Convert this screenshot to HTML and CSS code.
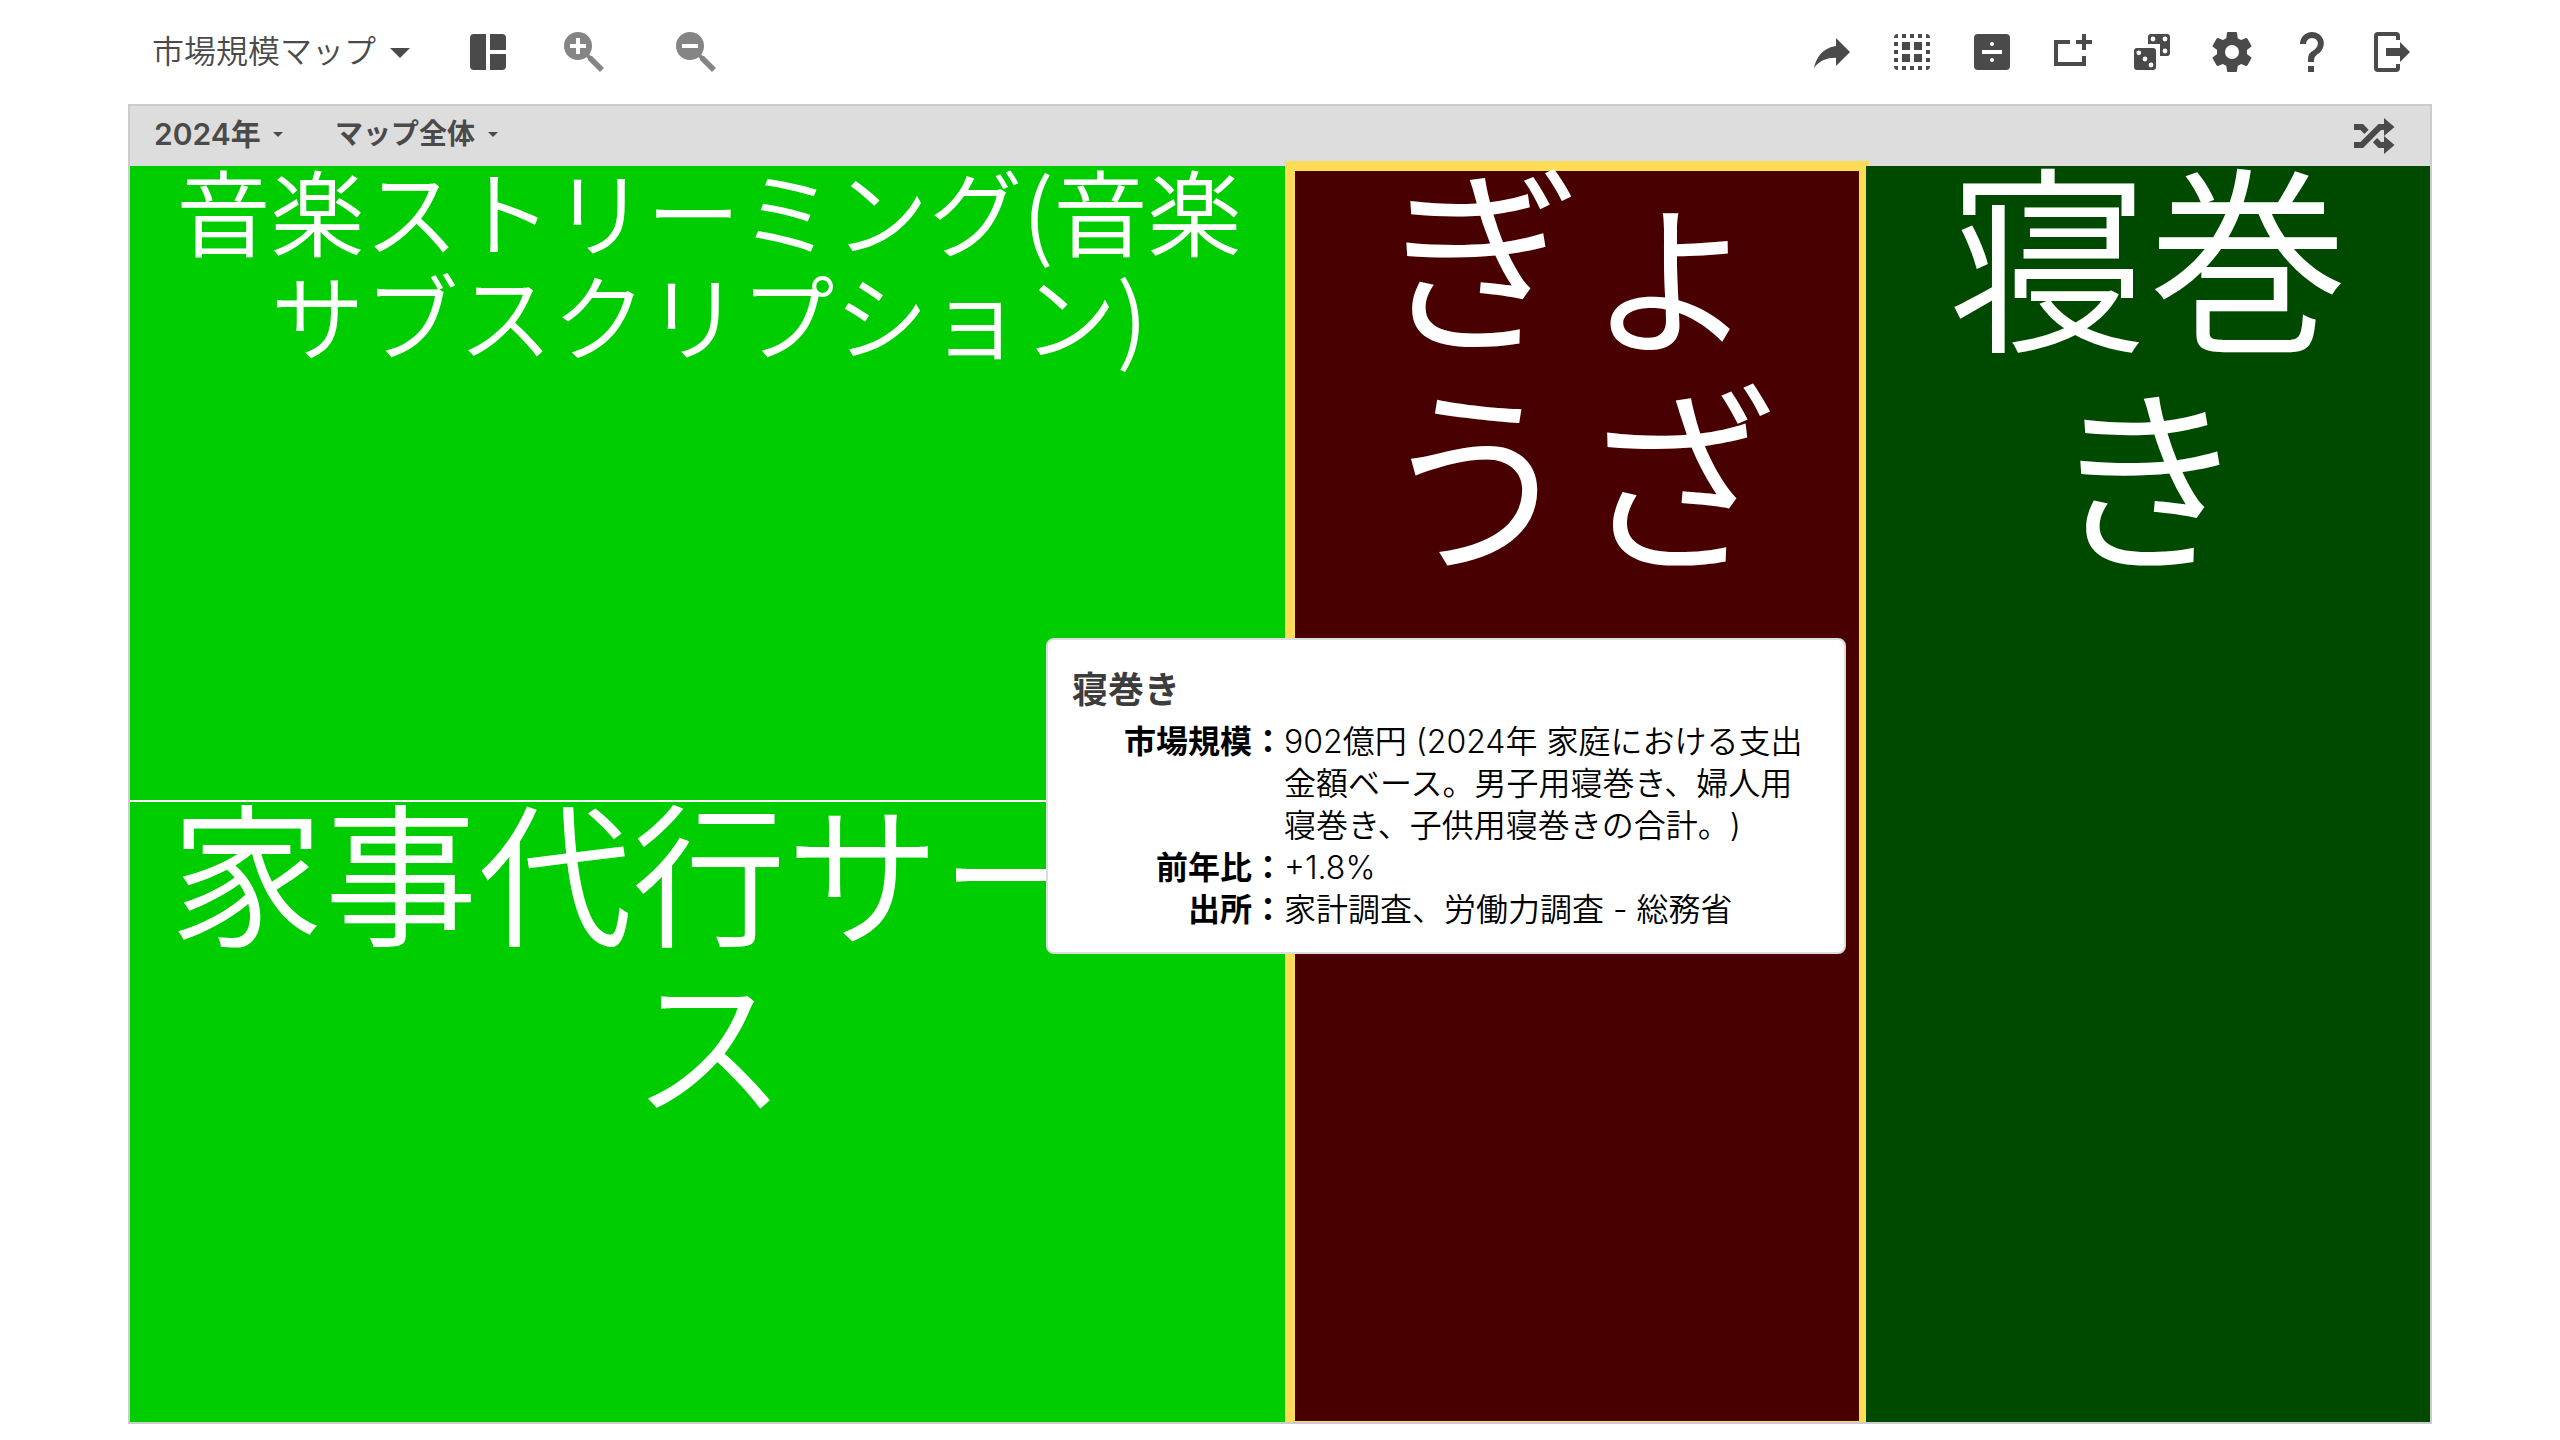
FILE: index.html
```html
<!DOCTYPE html>
<html lang="ja">
<head>
<meta charset="utf-8">
<meta name="viewport" content="width=device-width, initial-scale=1">
<title>市場規模マップ</title>
<link rel="stylesheet" href="styles.css">
</head>
<body>
<header class="toolbar">
  <button type="button" class="map-menu" aria-haspopup="menu">市場規模マップ<svg class="icon" viewBox="0 0 24 24"><path d="M7,10L12,15L17,10H7Z"/></svg></button>
  <div class="view-tools">
    <button type="button" class="icon-button" aria-label="レイアウト"><svg class="icon" viewBox="0 0 24 24"><path d="M11,21H5A2,2 0 0,1 3,19V5A2,2 0 0,1 5,3H11V21M13,21H19A2,2 0 0,0 21,19V13H13V21M21,11V5A2,2 0 0,0 19,3H13V11H21Z"/></svg></button>
    <button type="button" class="icon-button" aria-label="拡大" disabled><svg class="icon" viewBox="0 0 24 24"><path d="M9,2A7,7 0 0,1 16,9C16,10.57 15.5,12 14.61,13.19L15.41,14H16L22,20L20,22L14,16V15.41L13.19,14.61C12,15.5 10.57,16 9,16A7,7 0 0,1 2,9A7,7 0 0,1 9,2M8,5V8H5V10H8V13H10V10H13V8H10V5H8Z"/></svg></button>
    <button type="button" class="icon-button" aria-label="縮小" disabled><svg class="icon" viewBox="0 0 24 24"><path d="M9,2A7,7 0 0,1 16,9C16,10.57 15.5,12 14.61,13.19L15.41,14H16L22,20L20,22L14,16V15.41L13.19,14.61C12,15.5 10.57,16 9,16A7,7 0 0,1 2,9A7,7 0 0,1 9,2M5,8V10H13V8H5Z"/></svg></button>
  </div>
  <div class="page-tools">
    <button type="button" class="icon-button" aria-label="共有"><svg class="icon" viewBox="0 0 24 24"><path d="M21,12L14,5V9C7,10 4,15 3,20C5.5,16.5 9,14.9 14,14.9V19L21,12Z"/></svg></button>
    <button type="button" class="icon-button" aria-label="選択"><svg class="icon" viewBox="0 0 24 24"><path d="M3,5H5V3A2,2 0 0,0 3,5M7,3H9V5H7V3M11,3H13V5H11V3M15,3H17V5H15V3M19,3V5H21A2,2 0 0,0 19,3M3,7H5V9H3V7M3,11H5V13H3V11M3,15H5V17H3V15M19,7H21V9H19V7M19,11H21V13H19V11M19,15H21V17H19V15M3,19A2,2 0 0,0 5,21V19H3M7,19H9V21H7V19M11,19H13V21H11V19M15,19H17V21H15V19M19,21A2,2 0 0,0 21,19H19V21M7,7H11V11H7V7M13,7H17V11H13V7M7,13H11V17H7V13M13,13H17V17H13V13"/></svg></button>
    <button type="button" class="icon-button" aria-label="割り算"><svg class="icon" viewBox="0 0 24 24"><path d="M19,3H5A2,2 0 0,0 3,5V19A2,2 0 0,0 5,21H19A2,2 0 0,0 21,19V5A2,2 0 0,0 19,3M12,7A1,1 0 0,1 12,9A1,1 0 0,1 12,7M12,15A1,1 0 0,1 12,17A1,1 0 0,1 12,15M17,13H7V11H17V13Z"/></svg></button>
    <button type="button" class="icon-button" aria-label="追加"><svg class="icon" viewBox="0 0 24 24"><path d="M3,6H11V8H5V17H17V14H19V19H3V6M17,3H19V6H22V8H19V11H17V8H14V6H17V3Z"/></svg></button>
    <button type="button" class="icon-button" aria-label="ランダム"><svg class="icon" viewBox="0 0 24 24"><path fill-rule="evenodd" d="M4.5,10H12.5A1.5,1.5 0 0,1 14,11.5V19.5A1.5,1.5 0 0,1 12.5,21H4.5A1.5,1.5 0 0,1 3,19.5V11.5A1.5,1.5 0 0,1 4.5,10M5.4,11.2A1.2,1.2 0 0,0 5.4,13.6A1.2,1.2 0 0,0 5.4,11.2M8.5,14.3A1.2,1.2 0 0,0 8.5,16.7A1.2,1.2 0 0,0 8.5,14.3M11.5,17.3A1.2,1.2 0 0,0 11.5,19.7A1.2,1.2 0 0,0 11.5,17.3M11.5,3H19.5A1.5,1.5 0 0,1 21,4.5V12.5A1.5,1.5 0 0,1 19.5,14H16V8H10V4.5A1.5,1.5 0 0,1 11.5,3M12.5,4.3A1.2,1.2 0 0,0 12.5,6.7A1.2,1.2 0 0,0 12.5,4.3M18.5,4.3A1.2,1.2 0 0,0 18.5,6.7A1.2,1.2 0 0,0 18.5,4.3M18.5,10.3A1.2,1.2 0 0,0 18.5,12.7A1.2,1.2 0 0,0 18.5,10.3"/></svg></button>
    <button type="button" class="icon-button" aria-label="設定"><svg class="icon" viewBox="0 0 24 24"><path d="M12,15.5A3.5,3.5 0 0,1 8.5,12A3.5,3.5 0 0,1 12,8.5A3.5,3.5 0 0,1 15.5,12A3.5,3.5 0 0,1 12,15.5M19.43,12.97C19.47,12.65 19.5,12.33 19.5,12C19.5,11.67 19.47,11.34 19.43,11L21.54,9.37C21.73,9.22 21.78,8.95 21.66,8.73L19.66,5.27C19.54,5.05 19.27,4.96 19.05,5.05L16.56,6.05C16.04,5.66 15.5,5.32 14.87,5.07L14.5,2.42C14.46,2.18 14.25,2 14,2H10C9.75,2 9.54,2.18 9.5,2.42L9.13,5.07C8.5,5.32 7.96,5.66 7.44,6.05L4.95,5.05C4.73,4.96 4.46,5.05 4.34,5.27L2.34,8.73C2.21,8.95 2.27,9.22 2.46,9.37L4.57,11C4.53,11.34 4.5,11.67 4.5,12C4.5,12.33 4.53,12.65 4.57,12.97L2.46,14.63C2.27,14.78 2.21,15.05 2.34,15.27L4.34,18.73C4.46,18.95 4.73,19.03 4.95,18.95L7.44,17.94C7.96,18.34 8.5,18.68 9.13,18.93L9.5,21.58C9.54,21.82 9.75,22 10,22H14C14.25,22 14.46,21.82 14.5,21.58L14.87,18.93C15.5,18.67 16.04,18.34 16.56,17.94L19.05,18.95C19.27,19.03 19.54,18.95 19.66,18.73L21.66,15.27C21.78,15.05 21.73,14.78 21.54,14.63L19.43,12.97Z"/></svg></button>
    <button type="button" class="icon-button" aria-label="ヘルプ"><svg class="icon" viewBox="0 0 24 24"><path d="M10,19H13V22H10V19M12,2C17.35,2.22 19.68,7.62 16.5,11.67C15.67,12.67 14.33,13.33 13.67,14.17C13,15 13,16 13,17H10C10,15.33 10,13.92 10.67,12.92C11.33,11.92 12.67,11.33 13.5,10.67C15.92,8.43 15.32,5.26 12,5A3,3 0 0,0 9,8H6A6,6 0 0,1 12,2Z"/></svg></button>
    <button type="button" class="icon-button" aria-label="ログアウト"><svg class="icon" viewBox="0 0 24 24"><path d="M16,6H14V4H5V20H14V18H16V20A2,2 0 0,1 14,22H5A2,2 0 0,1 3,20V4A2,2 0 0,1 5,2H14A2,2 0 0,1 16,4V6M9,10H16V7L21,12L16,17V14H9V10Z"/></svg></button>
  </div>
</header>
<main class="frame">
  <div class="filter-bar">
    <label class="filter filter-year"><select aria-label="年"><option>2024年</option></select><svg class="caret" viewBox="0 0 10 5"><path d="M0,0H10L5,5Z"/></svg></label>
    <label class="filter"><select aria-label="表示範囲"><option>マップ全体</option></select><svg class="caret" viewBox="0 0 10 5"><path d="M0,0H10L5,5Z"/></svg></label>
    <button type="button" class="icon-button shuffle" aria-label="シャッフル"><svg class="icon" viewBox="0 0 24 24"><path d="M17,3L22.25,7.5L17,12L22.25,16.5L17,21V18H14.26L11.44,15.18L13.56,13.06L15.5,15H17V12V9H15.5L6.5,18H2V15H5.26L14.26,6H17V3M2,6H6.5L9.32,8.82L7.2,10.94L5.26,9H2V6Z"/></svg></button>
  </div>
  <div class="treemap">
    <div class="tile-stack">
      <div class="tile up-strong"><p class="tile-label size-s">音楽ストリーミング(音楽サブスクリプション)</p></div>
      <div class="tile up-strong"><p class="tile-label size-m">家事代行サービス</p></div>
    </div>
    <div class="tile down selected"><p class="tile-label size-l">ぎょうざ</p></div>
    <div class="tile up-weak"><p class="tile-label size-l">寝巻き</p></div>
    <section class="tooltip" role="tooltip">
      <h2 class="tooltip-title">寝巻き</h2>
      <dl class="facts">
        <dt>市場規模：</dt><dd>902億円 (2024年 家庭における支出金額ベース。男子用寝巻き、婦人用寝巻き、子供用寝巻きの合計。)</dd>
        <dt>前年比：</dt><dd>+1.8%</dd>
        <dt>出所：</dt><dd>家計調査、労働力調査 - 総務省</dd>
      </dl>
    </section>
  </div>
</main>
</body>
</html>
```
FILE: styles.css
```css
* {
  box-sizing: border-box;
}

body {
  margin: 0;
  padding: 0 5% 16px;
  min-height: 100vh;
  display: flex;
  flex-direction: column;
  background: #fff;
  color: #4a4a4a;
  font-family: Inter, "Noto Sans CJK JP", sans-serif;
  font-weight: 350;
  text-spacing-trim: space-all;
}

button,
select {
  margin: 0;
  padding: 0;
  border: 0;
  background: none;
  color: inherit;
  font: inherit;
  appearance: none;
  cursor: pointer;
}

.icon {
  display: block;
  width: 48px;
  height: 48px;
  fill: currentColor;
}

.icon-button:disabled {
  color: #858585;
}

.toolbar {
  height: 104px;
  padding: 0 16px 0 24px;
  display: flex;
  align-items: center;
}

.map-menu {
  display: flex;
  align-items: center;
  font-size: 32px;
  line-height: 48px;
  white-space: nowrap;
}

.view-tools {
  display: flex;
  gap: 64px;
  margin-left: 40px;
}

.view-tools .icon-button:first-child {
  margin-right: -16px;
}

.page-tools {
  display: flex;
  gap: 32px;
  margin-left: auto;
}

.frame {
  flex: 1;
  display: flex;
  flex-direction: column;
  border: 2px solid #ccc;
}

.filter-bar {
  height: 60px;
  padding: 0 32px 0 24px;
  display: flex;
  align-items: center;
  gap: 52px;
  background: #ddd;
}

.filter {
  display: flex;
  align-items: center;
  gap: 12px;
  padding-bottom: 4px;
  font-size: 28px;
  font-weight: 600;
  line-height: 48px;
}

.filter-year {
  font-size: 30px;
}

.caret {
  width: 10px;
  height: 5px;
  fill: currentColor;
  pointer-events: none;
}

.shuffle {
  margin-left: auto;
}

.treemap {
  position: relative;
  flex: 1;
  display: grid;
  grid-template-columns: 1158fr 574fr 564fr;
  gap: 2px;
  clip-path: inset(-5px 0 0);
}

.tile-stack {
  display: grid;
  grid-template-rows: 634fr 620fr;
  gap: 2px;
}

.tile {
  position: relative;
  min-width: 0;
  color: #fff;
  text-align: center;
}

.up-strong {
  background: #00cd00;
}

.up-weak {
  background: #004a00;
}

.down {
  background: #480000;
}

/* The highlight straddles the tile's edge and runs under its label. */
.selected::before {
  content: "";
  position: absolute;
  inset: -5px -5px -9px;
  border: 10px solid #ffdc55;
}

.tile-label {
  position: relative;
  margin: 0;
  padding: 0 24px;
  font-family: "Noto Sans CJK JP", sans-serif;
}

.size-s {
  margin-top: -9px;
  font-size: 94px;
  line-height: 104px;
}

.size-m {
  margin-top: -19px;
  font-size: 154px;
  line-height: 170px;
}

.size-l {
  margin-top: -25px;
  font-size: 200px;
  line-height: 219px;
}

.tooltip {
  position: absolute;
  left: 916px;
  top: 472px;
  width: 800px;
  padding: 25px 24px 21px;
  border: 2px solid #ddd;
  border-radius: 8px;
  background: #fff;
  color: #000;
}

.tooltip-title {
  margin: 0 0 6px;
  color: #3c3c3c;
  font-size: 36px;
  font-weight: 600;
  line-height: 50px;
}

.facts {
  margin: 0;
  display: grid;
  grid-template-columns: 212px 1fr;
  font-size: 32px;
  line-height: 42px;
}

.facts dt {
  font-weight: 600;
  text-align: right;
}

.facts dd {
  margin: 0;
}
```
